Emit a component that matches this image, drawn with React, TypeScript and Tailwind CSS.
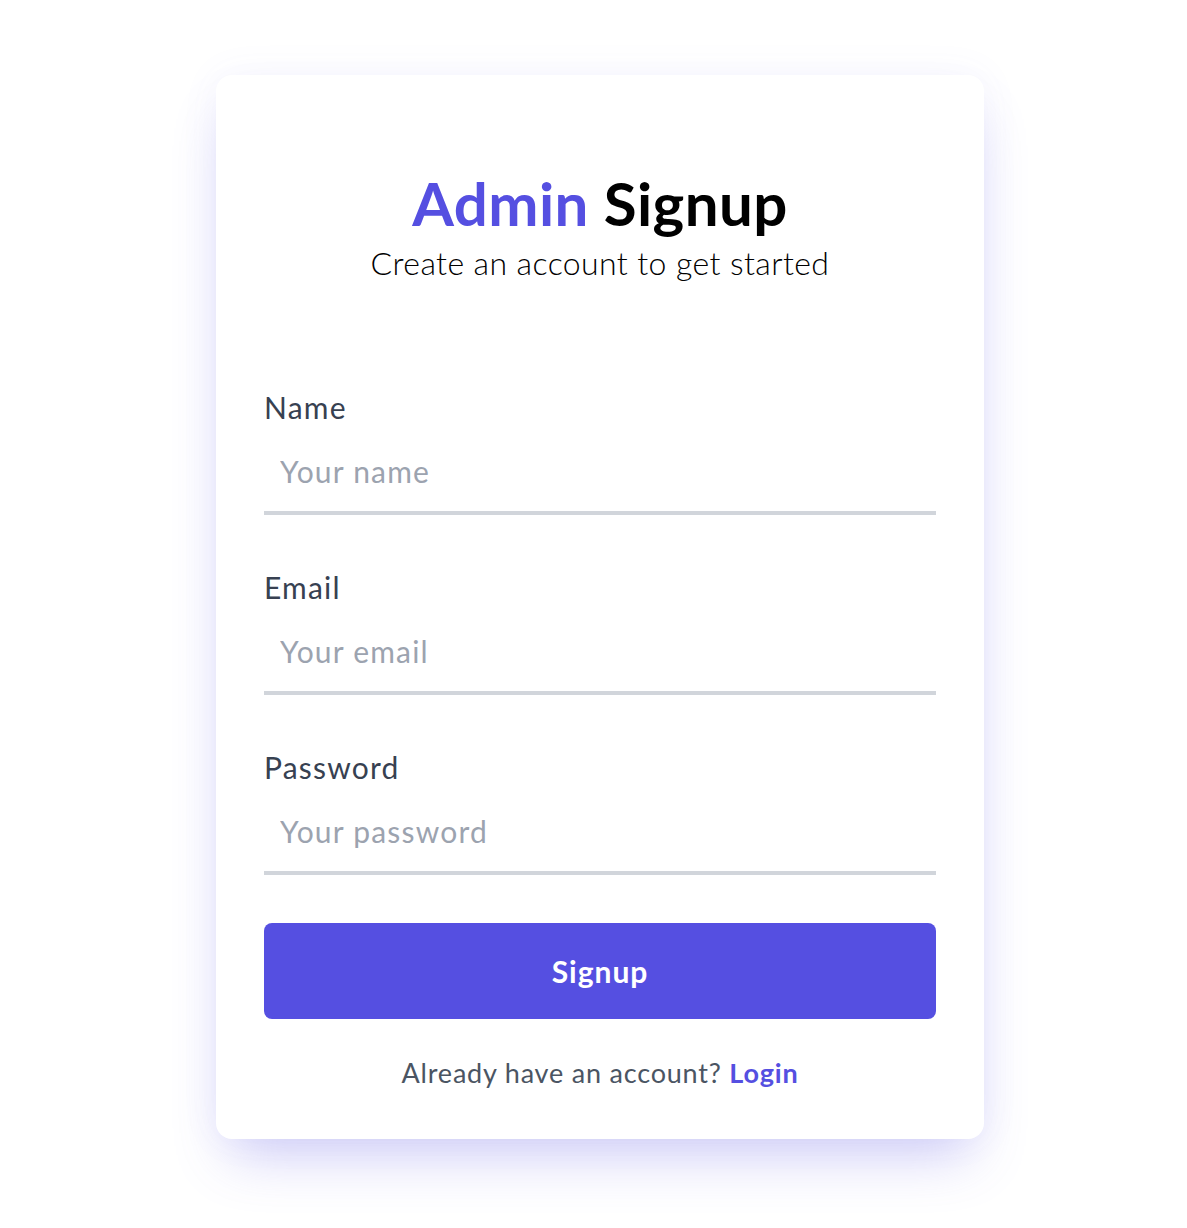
import { useState } from "react";

const fields = [
  { id: "name", label: "Name", type: "text", placeholder: "Your name" },
  { id: "email", label: "Email", type: "email", placeholder: "Your email" },
  { id: "password", label: "Password", type: "password", placeholder: "Your password" },
];

export default function App() {
  const [values, setValues] = useState<Record<string, string>>({});

  return (
    <div className="min-h-screen bg-white flex items-start justify-center pl-[13px] pt-[75px] pb-20" style={{ fontFamily: "Lato, 'Noto Sans', sans-serif" }}>
      <div className="w-[768px] rounded-2xl bg-white px-12 pt-[98px] pb-[53px] shadow-[0_30px_55px_-14px_rgba(99,94,230,0.3),0_0_40px_rgba(99,94,230,0.06)]">
        {/* header */}
        <div className="text-center">
          <h1 className="text-[60px] leading-none font-bold tracking-[0.4px]">
            <span className="text-[#554fe1]">Admin</span> <span className="text-black">Signup</span>
          </h1>
          <p className="mt-[14px] text-[32px] leading-none font-light tracking-[0.4px] text-black">Create an account to get started</p>
        </div>

        <form className="mt-[113px] flex flex-col gap-[57px]" onSubmit={(e) => e.preventDefault()}>
          {fields.map((f) => (
            <div key={f.id} className="flex flex-col">
              <label htmlFor={f.id} className="text-[30px] leading-none tracking-[1.2px] text-[#374151]">
                {f.label}
              </label>
              <input
                id={f.id}
                type={f.type}
                placeholder={f.placeholder}
                value={values[f.id] ?? ""}
                onChange={(e) => setValues({ ...values, [f.id]: e.target.value })}
                className="mt-[7px] h-[86px] w-full border-b-4 border-[#d1d5db] bg-transparent px-4 pt-[2px] text-[30px] tracking-[1.2px] text-[#374151] placeholder:text-[#9ca3af] outline-none"
              />
            </div>
          ))}
        </form>

        <button className="mt-[48px] h-[96px] w-full rounded-lg bg-[#554fe1] text-[30px] font-bold tracking-[1px] text-white">
          Signup
        </button>

        <p className="mt-[40px] text-center text-[27px] leading-none tracking-[0.8px] text-[#4b5563]">
          Already have an account? <a href="#" className="font-bold text-[#554fe1]">Login</a>
        </p>
      </div>
    </div>
  );
}
